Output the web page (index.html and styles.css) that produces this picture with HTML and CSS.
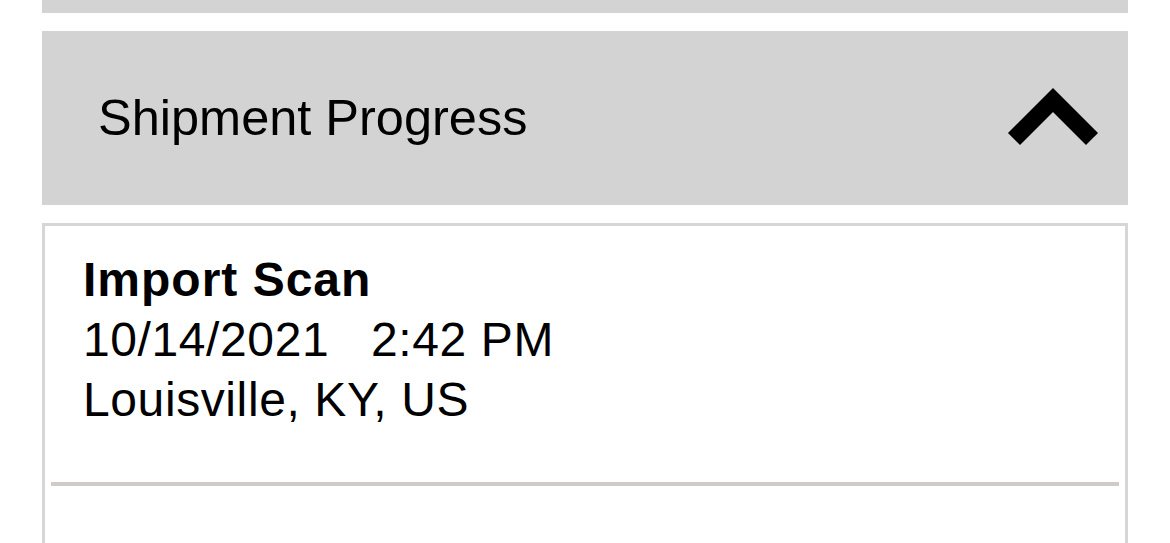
FILE: index.html
```html
<!DOCTYPE html>
<html lang="en">
<head>
    <meta charset="UTF-8">
    <title>Tracking</title>
    <link rel="stylesheet" href="styles.css">
</head>
<body>
<div class="section-bar"></div>

<div class="section-header">
    <span class="section-title">Shipment Progress</span>
    <svg class="chevron" width="100" height="70" viewBox="0 0 100 70">
        <polyline points="11,56 50,17 89,56" fill="none" stroke="#000" stroke-width="17" stroke-linejoin="miter" stroke-linecap="butt"/>
    </svg>
</div>

<div class="progress-card">
    <div class="scan-entry">
        <div class="scan-type">Import Scan</div>
        <div class="scan-time">10/14/2021   2:42 PM</div>
        <div class="scan-place">Louisville, KY, US</div>
    </div>
</div>
</body>
</html>
```

FILE: styles.css
```css
body {
    margin: 0;
    padding: 0 42px;
    font-family: "Liberation Sans", Arial, sans-serif;
    color: #000;
    background: #fff;
    overflow: hidden;
}

.section-bar {
    height: 13px;
    background-color: #d3d3d3;
}

.section-header {
    margin-top: 18px;
    height: 174px;
    background-color: #d3d3d3;
    display: flex;
    align-items: center;
    justify-content: space-between;
    padding: 0 25px 0 56px;
}

.section-title {
    font-size: 50.5px;
    margin-top: -2px;
}

.chevron {
    display: block;
}

.progress-card {
    margin-top: 18px;
    border: 3px solid #d6d6d6;
    border-bottom: none;
    height: 400px;
    padding: 0 6px;
}

.scan-entry {
    padding: 24px 0 52px 32px;
    border-bottom: 4px solid #cfccc8;
}

.scan-type {
    font-size: 48px;
    font-weight: bold;
    line-height: 60px;
    letter-spacing: 1px;
}

.scan-time,
.scan-place {
    font-size: 48px;
    line-height: 60px;
    letter-spacing: 0.6px;
    white-space: pre;
}
```
